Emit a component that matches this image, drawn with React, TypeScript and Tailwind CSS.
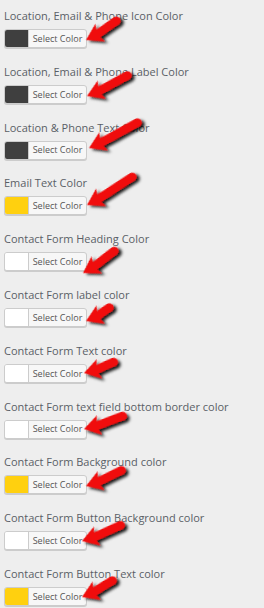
import React from "react";

type Row = { label: string; color: string };

const ROWS: Row[] = [
  { label: "Location, Email & Phone Icon Color", color: "#3f3f3f" },
  { label: "Location, Email & Phone Label Color", color: "#3f3f3f" },
  { label: "Location & Phone Text Color", color: "#3f3f3f" },
  { label: "Email Text Color", color: "#ffd00f" },
  { label: "Contact Form Heading Color", color: "#ffffff" },
  { label: "Contact Form label color", color: "#ffffff" },
  { label: "Contact Form Text color", color: "#ffffff" },
  { label: "Contact Form text field bottom border color", color: "#ffffff" },
  { label: "Contact Form Background color", color: "#ffd00f" },
  { label: "Contact Form Button Background color", color: "#ffffff" },
  { label: "Contact Form Button Text color", color: "#ffd00f" },
];

// tip x, tip y, tail x, tail y
const ARROWS: [number, number, number, number][] = [
  [86, 40, 120, 22],
  [87, 96, 131, 77],
  [89, 148, 141, 124],
  [87, 205, 136, 178],
  [83, 273, 118, 252],
  [86, 321, 113, 309],
  [84, 373, 117, 364],
  [84, 429, 126, 418],
  [86, 486, 125, 472],
  [82, 541, 124, 527],
  [82, 597, 116, 582],
];

function Arrow({ a }: { a: [number, number, number, number] }) {
  const [tx, ty, ex, ey] = a;
  const L = Math.hypot(ex - tx, ey - ty);
  const ang = (Math.atan2(ey - ty, ex - tx) * 180) / Math.PI;
  const m = (L * 0.55).toFixed(1);
  const d = `M0,0 L16,-10 L14,-4.2 Q${m},-5.5 ${(L - 3.5).toFixed(1)},-7 A4.3,4.3 0 0 1 ${(L - 2).toFixed(1)},1.5 Q${m},3.2 14,4.2 L16,10 Z`;
  return <path d={d} transform={`translate(${tx} ${ty}) rotate(${ang.toFixed(1)})`} fill="#f01010" filter="url(#sh)" />;
}

function ColorPicker({ color }: { color: string }) {
  return (
    <div className="flex h-[19px] w-[83px] overflow-hidden rounded-[3px] border border-[#cccccc] bg-[#f7f7f7] shadow-[0_1px_0_#cccccc]">
      <div className="w-[24px] border-r border-[#cccccc]" style={{ backgroundColor: color }} />
      <div className="flex flex-1 items-center justify-center text-[9px] text-[#555555]">Select Color</div>
    </div>
  );
}

export default function App() {
  return (
    <div className="relative h-[608px] w-[264px] overflow-hidden bg-[#eeeeee] font-['Open_Sans',sans-serif]">
      <div className="flex flex-col pl-[4px] pt-[9px]">
        {ROWS.map((r) => (
          <div key={r.label} className="mb-[16.8px] flex flex-col">
            <div className="mb-[6px] whitespace-nowrap text-[11px] leading-[14px] text-[#5a5f66]">{r.label}</div>
            <ColorPicker color={r.color} />
          </div>
        ))}
      </div>
      <svg className="pointer-events-none absolute left-0 top-0" width="264" height="608">
        <defs>
          <filter id="sh" x="-30%" y="-30%" width="160%" height="160%">
            <feDropShadow dx="2" dy="3" stdDeviation="1.5" floodColor="#000" floodOpacity="0.9" />
          </filter>
        </defs>
        {ARROWS.map((a, i) => (
          <Arrow key={i} a={a} />
        ))}
      </svg>
    </div>
  );
}
